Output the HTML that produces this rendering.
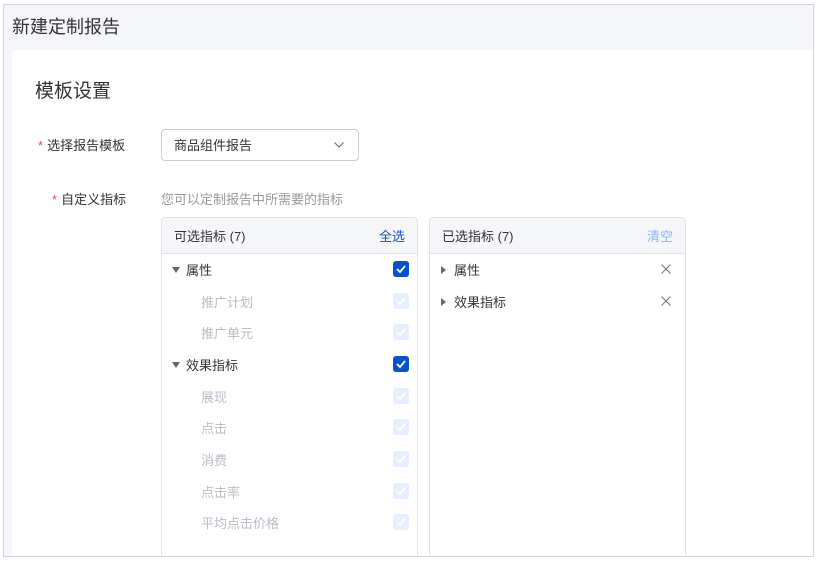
<!DOCTYPE html>
<html><head><meta charset="utf-8"><style>
*{margin:0;padding:0;box-sizing:border-box}
body{width:819px;height:562px;background:#fff;font-family:"Liberation Sans","Noto Sans CJK SC",sans-serif;position:relative;overflow:hidden}
.frame{position:absolute;left:3px;top:4px;width:811px;height:553px;border:1px solid #d3d5da;background:#f5f6f9;overflow:hidden}
.title{position:absolute;left:8px;top:8px;font-size:18px;color:#333}
.card{position:absolute;left:8px;top:45px;right:0;bottom:0;background:#fff;border-radius:4px 0 0 0}
.abs{position:absolute}
.h2{left:23px;top:26px;font-size:19px;color:#333}
.lbl{font-size:13px;color:#333}
.star{color:#e5484d;margin-right:4px}
.sel{left:149px;top:79px;width:198px;height:32px;border:1px solid #c9ccd2;border-radius:4px;font-size:13px;color:#333;padding:5px 0 0 12px}
.hint{left:149px;top:139px;font-size:13px;color:#999}
.panel{top:167px;width:257px;height:360px;border:1px solid #dfe2e8;border-radius:4px;overflow:hidden}
.ph{height:36px;background:#f5f6f9;border-bottom:1px solid #dfe2e8;font-size:13px;color:#333;padding:8px 12px;position:relative}
.ph span{position:absolute;right:12px;top:8px}
.row{position:absolute;font-size:13px;color:#333;margin-top:-2px}
.sub{color:#b8bcc4}
.cb{position:absolute;left:231px;width:16px;height:16px;border-radius:3px;background:#0a52cc;margin-top:-1px}
.cb.d{background:#e6efff}
.cb svg{position:absolute;left:0;top:0}
.tri{display:inline-block;width:0;height:0;border-left:4px solid transparent;border-right:4px solid transparent;border-top:6px solid #666;margin-right:6px;vertical-align:2px}
.trr{display:inline-block;width:0;height:0;border-top:4px solid transparent;border-bottom:4px solid transparent;border-left:5px solid #666;margin-right:8px;vertical-align:1px}
</style></head><body>
<div class="frame">
<div class="title">新建定制报告</div>
<div class="card">
<div class="abs h2">模板设置</div>
<div class="abs lbl" style="left:26px;top:85px"><span class="star">*</span>选择报告模板</div>
<div class="abs sel">商品组件报告<svg style="position:absolute;right:14px;top:12px" width="10" height="6"><path d="M0.5 0.5L5 5L9.5 0.5" fill="none" stroke="#666" stroke-width="1"/></svg></div>
<div class="abs lbl" style="left:40px;top:139px"><span class="star">*</span>自定义指标</div>
<div class="abs hint">您可以定制报告中所需要的指标</div>
<div class="abs panel" style="left:149px">
<div class="ph">可选指标 (7)<span style="color:#0a52cc">全选</span></div>
<div class="row" style="left:10px;top:44px"><i class="tri"></i>属性</div>
<div class="row sub" style="left:39px;top:76px">推广计划</div>
<div class="row sub" style="left:39px;top:107px">推广单元</div>
<div class="row" style="left:10px;top:139px"><i class="tri"></i>效果指标</div>
<div class="row sub" style="left:39px;top:171px">展现</div>
<div class="row sub" style="left:39px;top:202px">点击</div>
<div class="row sub" style="left:39px;top:234px">消费</div>
<div class="row sub" style="left:39px;top:266px">点击率</div>
<div class="row sub" style="left:39px;top:297px">平均点击价格</div>
<div class="cb" style="top:44px"><svg width="16" height="16"><path d="M4 8l3 3 5-6" fill="none" stroke="#fff" stroke-width="1.8"/></svg></div>
<div class="cb d" style="top:76px"><svg width="16" height="16"><path d="M4 8l3 3 5-6" fill="none" stroke="#fff" stroke-width="1.8"/></svg></div>
<div class="cb d" style="top:107px"><svg width="16" height="16"><path d="M4 8l3 3 5-6" fill="none" stroke="#fff" stroke-width="1.8"/></svg></div>
<div class="cb" style="top:139px"><svg width="16" height="16"><path d="M4 8l3 3 5-6" fill="none" stroke="#fff" stroke-width="1.8"/></svg></div>
<div class="cb d" style="top:171px"><svg width="16" height="16"><path d="M4 8l3 3 5-6" fill="none" stroke="#fff" stroke-width="1.8"/></svg></div>
<div class="cb d" style="top:202px"><svg width="16" height="16"><path d="M4 8l3 3 5-6" fill="none" stroke="#fff" stroke-width="1.8"/></svg></div>
<div class="cb d" style="top:234px"><svg width="16" height="16"><path d="M4 8l3 3 5-6" fill="none" stroke="#fff" stroke-width="1.8"/></svg></div>
<div class="cb d" style="top:266px"><svg width="16" height="16"><path d="M4 8l3 3 5-6" fill="none" stroke="#fff" stroke-width="1.8"/></svg></div>
<div class="cb d" style="top:297px"><svg width="16" height="16"><path d="M4 8l3 3 5-6" fill="none" stroke="#fff" stroke-width="1.8"/></svg></div>
</div>
<div class="abs panel" style="left:417px">
<div class="ph">已选指标 (7)<span style="color:#8ab4f0">清空</span></div>
<div class="row" style="left:11px;top:44px"><i class="trr"></i>属性</div>
<div class="row" style="left:11px;top:76px"><i class="trr"></i>效果指标</div>
<svg class="abs" style="left:231px;top:46px" width="10" height="10"><path d="M0.5 0.5L9.5 9.5M9.5 0.5L0.5 9.5" stroke="#777" stroke-width="1.1"/></svg>
<svg class="abs" style="left:231px;top:78px" width="10" height="10"><path d="M0.5 0.5L9.5 9.5M9.5 0.5L0.5 9.5" stroke="#777" stroke-width="1.1"/></svg>
</div>
</div>
</div>
</body></html>
